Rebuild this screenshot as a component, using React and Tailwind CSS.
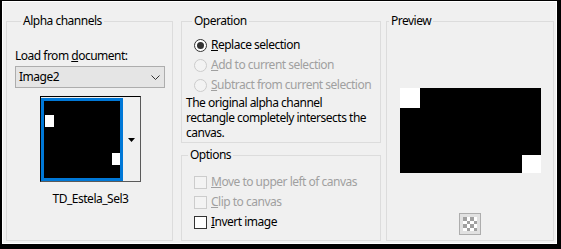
const Radio = ({ checked, disabled, children }) => (
  <div className="flex items-center h-[20px] pl-[12px]">
    <span
      className={`w-[13px] h-[13px] rounded-full border flex items-center justify-center ${
        disabled ? 'border-[#cccccc] bg-[#f3f3f3]' : 'border-[#333333] bg-white'
      }`}
    >
      {checked && <span className="w-[7px] h-[7px] rounded-full bg-[#333333]" />}
    </span>
    <span className={`ml-[4px] whitespace-nowrap ${disabled ? 'text-[#a0a0a0]' : 'text-black'}`}>{children}</span>
  </div>
)

const Check = ({ disabled, children }) => (
  <div className="flex items-center h-[20px] pl-[12px]">
    <span
      className={`w-[13px] h-[13px] border ${
        disabled ? 'border-[#cccccc] bg-[#f3f3f3]' : 'border-[#333333] bg-white'
      }`}
    />
    <span className={`ml-[4px] whitespace-nowrap ${disabled ? 'text-[#a0a0a0]' : 'text-black'}`}>{children}</span>
  </div>
)

const Group = ({ title, className, legendClass = 'ml-[6px]', children }) => (
  <fieldset className={`min-w-0 border border-[#dcdcdc] ${className}`}>
    <legend className={`px-[2px] leading-[16px] ${legendClass}`}>{title}</legend>
    {children}
  </fieldset>
)

export default function App() {
  return (
    <div
      className="w-[561px] h-[249px] border-t border-l-2 border-r-4 border-b-[5px] border-black text-[12px] tracking-[-0.5px] text-black"
      style={{ fontFamily: '"Noto Sans", "Open Sans", sans-serif' }}
    >
      <div className="h-full border border-white bg-[#f0f0f0] flex items-start pl-[3px] pt-[11px]">
        {/* Alpha channels */}
        <Group title="Alpha channels" className="w-[167px] h-[228px] pl-[8px]">
          <div className="mt-[19px] leading-[16px]">
            Load from <u>d</u>ocument:
          </div>
          <div className="mt-[2px] w-[150px] h-[22px] border border-[#adadad] bg-[#e5e5e5] flex items-center justify-between pl-[3px] pr-[4px]">
            <span>Image2</span>
            <svg width="9" height="5" viewBox="0 0 9 5">
              <path d="M0.5 0.5 L4.5 4.5 L8.5 0.5" fill="none" stroke="#333" strokeWidth="1" />
            </svg>
          </div>
          <div className="ml-[25px] mt-[8px] w-[101px] flex flex-col items-center">
            <div className="w-[101px] h-[86px] border border-t-black border-l-black border-r-[#5a5a5a] border-b-[#5a5a5a] flex pt-[1px]">
              <div className="w-[82px] h-[83px] border-[3px] border-[#0078d7] bg-black">
                <svg width="76" height="77" viewBox="0 0 76 77" className="block">
                  <rect width="76" height="77" fill="#000" />
                  <rect x="1" y="14" width="9" height="12" fill="#fff" />
                  <rect x="68" y="52" width="8" height="12" fill="#fff" />
                </svg>
              </div>
              <div className="flex-1 flex items-center justify-center">
                <svg width="7" height="4" viewBox="0 0 7 4">
                  <path d="M0 0 H7 L3.5 4 Z" fill="#000" />
                </svg>
              </div>
            </div>
            <div className="mt-[9px] leading-[16px]">TD_Estela_Sel3</div>
          </div>
        </Group>

        {/* Operation + Options */}
        <div className="ml-[8px] w-[200px] flex flex-col">
          <Group title="Operation" className="h-[130px] pl-[4px]">
            <div className="mt-[6px] -ml-[4px]">
              <Radio checked>
                <u>R</u>eplace selection
              </Radio>
              <Radio disabled>
                <u>A</u>dd to current selection
              </Radio>
              <Radio disabled>
                <u>S</u>ubtract from current selection
              </Radio>
            </div>
            <p className="leading-[15px] whitespace-nowrap">
              The original alpha channel
              <br />
              rectangle completely intersects the
              <br />
              canvas.
            </p>
          </Group>
          <Group title="Options" className="mt-[4px] h-[94px]">
            <div className="mt-[9px]">
              <Check disabled>
                <u>M</u>ove to upper left of canvas
              </Check>
              <Check disabled>
                <u>C</u>lip to canvas
              </Check>
              <Check>
                <u>I</u>nvert image
              </Check>
            </div>
          </Group>
        </div>

        {/* Preview */}
        <Group title="Preview" legendClass="ml-[2px]" className="ml-[5px] w-[168px] h-[228px] flex flex-col items-center">
          <svg width="141" height="85" viewBox="0 0 141 85" className="mt-[59px] block">
            <rect width="141" height="85" fill="#000" />
            <rect x="0" y="0" width="20" height="20" fill="#fff" />
            <rect x="122" y="67" width="19" height="18" fill="#fff" />
          </svg>
          <div className="mt-[40px] w-[22px] h-[22px] border border-[#adadad] bg-[#e1e1e1] flex items-center justify-center">
            <svg width="14" height="14" viewBox="0 0 4 4" shapeRendering="crispEdges">
              <rect width="4" height="4" fill="#fff" />
              <rect x="0" y="0" width="1" height="1" fill="#a0a0a0" />
              <rect x="2" y="0" width="1" height="1" fill="#a0a0a0" />
              <rect x="1" y="1" width="1" height="1" fill="#a0a0a0" />
              <rect x="3" y="1" width="1" height="1" fill="#a0a0a0" />
              <rect x="0" y="2" width="1" height="1" fill="#a0a0a0" />
              <rect x="2" y="2" width="1" height="1" fill="#a0a0a0" />
              <rect x="1" y="3" width="1" height="1" fill="#a0a0a0" />
              <rect x="3" y="3" width="1" height="1" fill="#a0a0a0" />
            </svg>
          </div>
        </Group>
      </div>
    </div>
  )
}
